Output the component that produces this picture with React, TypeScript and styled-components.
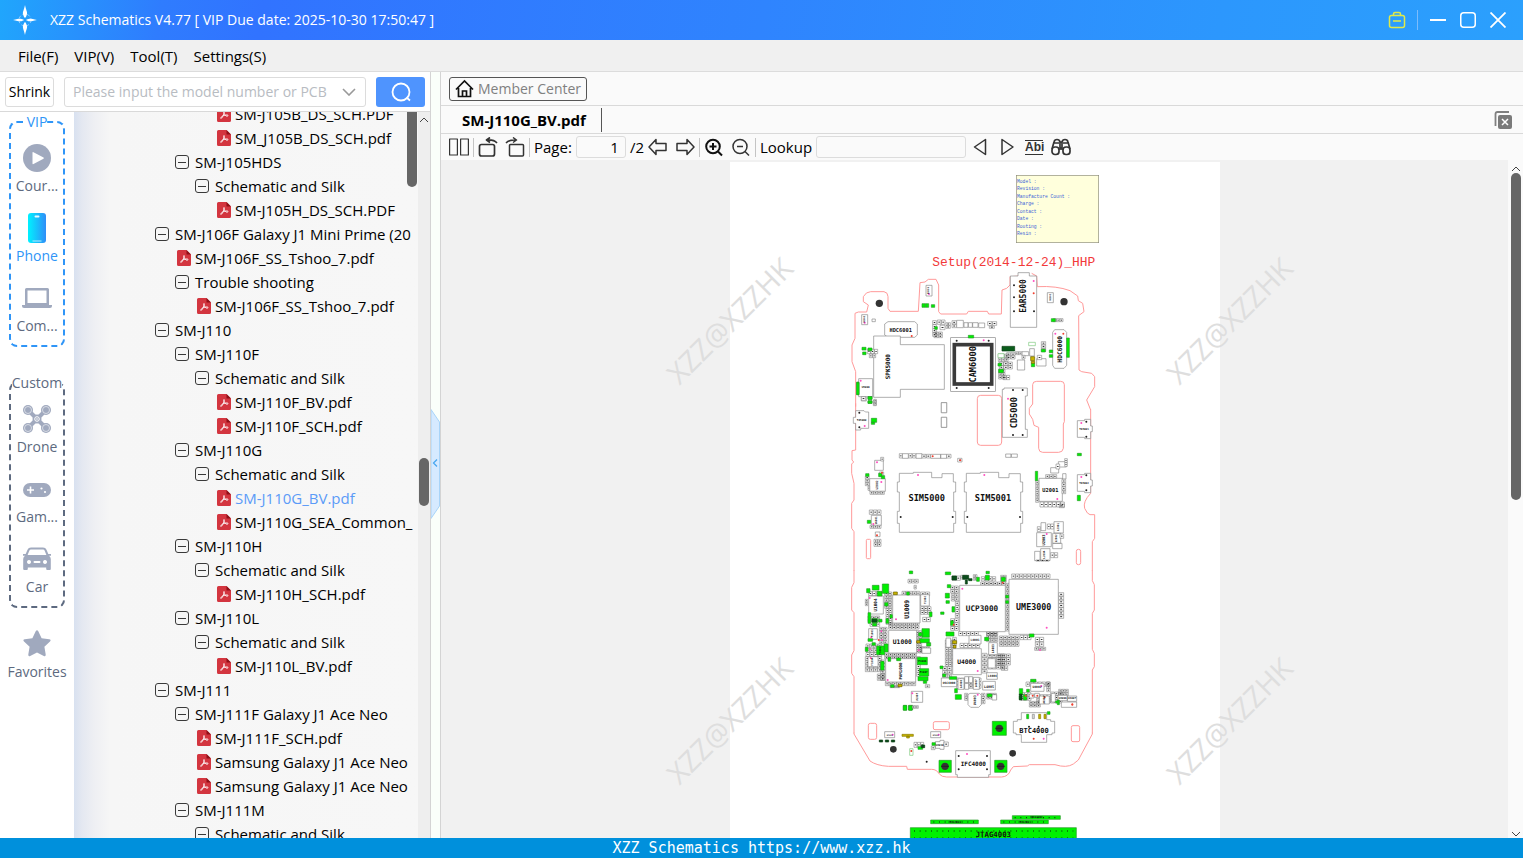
import React from 'react';
import styled, { createGlobalStyle } from 'styled-components';

const Global = createGlobalStyle`
  * { box-sizing: border-box; }
  body { margin: 0; background: #fff; font-family: "Open Sans", "Noto Sans", sans-serif; font-size: 15px; color: #000; }
  button, input { font: inherit; color: inherit; margin: 0; padding: 0; }
  button { background: none; border: 0; cursor: pointer; }
  svg { display: block; flex: none; }
  ul { list-style: none; margin: 0; padding: 0; }
`;

/* ---------- frame ---------- */
const Window = styled.div`
  display: flex; flex-direction: column; height: 100vh; overflow: hidden;
`;
const TitleBar = styled.header`
  flex: none; height: 40px; display: flex; align-items: center; padding: 0 15px 0 10px;
  background: linear-gradient(100deg, #20a6fc 0, #2f7cfe 160px, #3173ff 260px, #2f84fe 50%, #2c97fd 80%, #2ba0fd 100%);
  color: #fff;
`;
const Title = styled.h1`
  flex: 1; margin: 0 0 0 10px; font-size: 14px; font-weight: 400; line-height: 20px; white-space: nowrap;
`;
const WindowTools = styled.div`display: flex; align-items: center; gap: 10px;`;
const TitleButton = styled.button`width: 20px; height: 20px; display: grid; place-items: center;`;
const TitleRule = styled.span`width: 1px; height: 20px; background: #7cbcfc;`;
const MenuBar = styled.nav`
  flex: none; height: 32px; display: flex; align-items: center; gap: 16px; padding: 0 18px;
  background: #f0f0f0; border-bottom: 1px solid #dcdcdc;
`;
const MenuItem = styled.button`line-height: 20px; white-space: nowrap;`;
const Main = styled.main`flex: 1; min-height: 0; display: flex;`;
const StatusBar = styled.footer`
  flex: none; height: 20px; background: #0090dc; color: #fff; text-align: center;
  font: 15px/20px "DejaVu Sans Mono", monospace;
`;

/* ---------- left side ---------- */
const Side = styled.aside`
  flex: 0 0 431px; min-width: 0; display: flex; flex-direction: column; background: #fff; border-right: 1px solid #d4d4d4;
`;
const SearchRow = styled.form`
  flex: none; height: 40px; display: flex; align-items: center; gap: 10px; padding: 0 5px; border-bottom: 1px solid #d9d9d9;
`;
const ShrinkButton = styled.button`
  flex: 0 0 49px; height: 30px; border: 1px solid #dcdcdc; border-radius: 3px; background: #fff; font-size: 14px;
`;
const Combo = styled.div`
  flex: 1; min-width: 0; height: 30px; display: flex; align-items: center; border: 1px solid #dcdcdc; border-radius: 3px;
`;
const ComboInput = styled.input`
  flex: 1; min-width: 0; height: 28px; padding-left: 8px; border: 0; outline: 0; background: none; font-size: 14px;
  &::placeholder { color: #b8bcc2; }
`;
const ComboArrow = styled.button`width: 32px; height: 28px; display: grid; place-items: center;`;
const SearchButton = styled.button`
  flex: 0 0 49px; height: 30px; display: grid; place-items: center; background: #4f94fe; border-radius: 3px;
`;
const SideBody = styled.div`flex: 1; min-height: 0; display: flex;`;
const CategoryNav = styled.nav`flex: 0 0 74px; padding: 0 9px; overflow: hidden; background: #fff;`;
const Group = styled.fieldset<{ $tone: string }>`
  margin: 0 0 26px; padding: 0 0 3px; min-width: 0; border: 2px dashed ${p => p.$tone}; border-radius: 8px;
  &:last-of-type { margin-bottom: 10px; }
`;
const GroupName = styled.legend<{ $tone: string }>`
  margin: 0 auto; padding: 0; height: 20px; font-size: 14px; line-height: 20px; white-space: nowrap; color: ${p => p.$tone};
`;
const Category = styled.button<{ $active?: boolean }>`
  width: 100%; height: 70px; padding: 11px 0 6px; display: flex; flex-direction: column; align-items: center; gap: 3px;
  font-size: 14px; line-height: 20px; color: ${p => (p.$active ? '#2f95f7' : '#5d6a80')};
`;
const TreePane = styled.div`
  position: relative; flex: 1; min-width: 0; overflow: hidden; padding-left: 81px;
  background: linear-gradient(90deg, #d8e1f0 0, #e4e8f1 8px, #eeeff3 20px, #f6f6f6 36px, #f7f7f7 100%);
`;
const Tree = styled.ul`margin-top: -10px;`;
const TreeRow = styled.li<{ $level: number }>`
  height: 24px; display: flex; align-items: center; gap: 6px; padding-left: ${p => p.$level * 20}px;
  line-height: 24px; white-space: nowrap;
`;
const Toggle = styled.button`
  width: 14px; height: 14px; flex: none; display: grid; place-items: center;
  border: 1px solid #3a3a3a; border-radius: 3px;
  &::after { content: ""; width: 8px; height: 1px; background: #3a3a3a; }
`;
const FileLink = styled.a<{ $current?: boolean }>`
  display: flex; align-items: center; gap: 4px; padding-left: 2px; text-decoration: none;
  color: ${p => (p.$current ? '#5b9bf8' : '#000')};
`;
const OuterScroll = styled.div`flex: 0 0 12px; padding: 4px 1px; background: #eeeeee;`;
const Thumb = styled.div<{ $top: number; $size: number }>`
  height: ${p => p.$size}px; margin-top: ${p => p.$top}px; border-radius: 5px; background: #666;
`;
const InnerThumb = styled(Thumb)`position: absolute; top: 0; right: 1px; width: 10px; border-radius: 0 0 5px 5px;`;
const Splitter = styled.div`
  flex: 0 0 10px; display: flex; align-items: center; padding-top: 18px; background: #fafffa; border-right: 1px solid #d4d4d4;
`;

/* ---------- right side ---------- */
const Content = styled.section`flex: 1; min-width: 0; display: flex; flex-direction: column; background: #fafafa;`;
const CenterRow = styled.div`
  flex: none; height: 34px; display: flex; align-items: center; padding: 0 8px; border-bottom: 1px solid #d9d9d9;
`;
const MemberButton = styled.button`
  height: 24px; display: flex; align-items: center; gap: 4px; padding: 0 5px; font-size: 14px;
  border: 1px solid #555; border-radius: 3px; color: #808080;
`;
const TabRow = styled.div`
  flex: none; height: 28px; display: flex; align-items: center; justify-content: space-between;
  padding-right: 10px; border-bottom: 1px solid #d9d9d9;
`;
const Tab = styled.button`
  height: 24px; padding: 0 15px 0 21px; border-right: 1px solid #555; font-size: 15px; font-weight: 700;
`;
const Toolbar = styled.div`flex: none; height: 26px; display: flex; align-items: center; gap: 4px; padding: 0 8px; line-height: 20px;`;
const ToolGroup = styled.div`display: flex; align-items: center; gap: 7px;`;
const ToolButton = styled.button`width: 20px; height: 22px; display: grid; place-items: center;`;
const Divider = styled.span`width: 1px; height: 19px; background: #c4c4c4;`;
const PageInput = styled.input`
  width: 50px; height: 22px; padding-right: 6px; border: 1px solid #dcdcdc; border-radius: 3px; background: #fafafa; text-align: right;
`;
const LookupInput = styled.input`
  width: 150px; height: 22px; border: 1px solid #dcdcdc; border-radius: 3px; background: #fafafa;
`;
const Abi = styled.span`
  width: 18px; border: solid #333; border-width: 1px 0; font: 700 12px/13px "Liberation Sans", sans-serif; color: #333;
`;
const Viewer = styled.div`flex: 1; min-height: 0; display: flex;`;
const Canvas = styled.div`
  flex: 1; min-width: 0; overflow: hidden; display: flex; flex-direction: column; align-items: center; padding-top: 2px; background: #f1f1f1;
`;
const Paper = styled.div`width: 490px; height: 676px; flex: none; background: #fff; svg { overflow: visible; }`;
const ViewerScroll = styled.div`
  flex: 0 0 14px; display: flex; flex-direction: column; align-items: stretch; padding: 5px 2px 0 3px; background: #fafafa;
`;
const ScrollGap = styled.span`flex: 1;`;

/* ---------- icons ---------- */
const Arrow = ({ down }: { down?: boolean }) => (
  <svg width="10" height="8" viewBox="0 0 10 8" fill="none" stroke="#444" strokeWidth="1">
    <path d={down ? 'M1 2l4 4 4-4' : 'M1 6l4-4 4 4'} />
  </svg>
);
const Logo = () => (
  <svg width="30" height="32" viewBox="0 0 30 32">
    <circle cx="15" cy="16" r="6" fill="none" stroke="#8fccff" strokeDasharray="3 2" />
    <g fill="#fff">
      <path d="M15 1c1 5 2.500 7 2 9s-1 3-2 4c-1-1-1.500-2-2-4s1-4 2-9z" />
      <path d="M15 31c1-5 2.500-7 2-9s-1-3-2-4c-1 1-1.500 2-2 4s1 4 2 9z" />
      <path d="M3 16c4-1 6-1.500 7.500-1.300S13 15.300 14 16c-1 .700-2 1.200-3.500 1.300S7 17 3 16z" />
      <path d="M27 16c-4-1-6-1.500-7.500-1.300S17 15.300 16 16c1 .700 2 1.200 3.500 1.300S23 17 27 16z" />
    </g>
  </svg>
);
const PdfIcon = () => (
  <svg width="14" height="16" viewBox="0 0 14 16">
    <path d="M1.500 0H9.500L14 4.500V14.500A1.500 1.500 0 0 1 12.500 16H1.500A1.500 1.500 0 0 1 0 14.500V1.500A1.500 1.500 0 0 1 1.500 0z" fill="#d3353f" />
    <path d="M9.500 0L14 4.500H9.500z" fill="#8f1018" />
    <path d="M7 5.500c-.800 1 .500 3 1.500 4s2.500 1 2.500 0-3.500-.400-5 .300-2.500 2-2.300 2.500 1.300-.300 2-1.800S7.800 6.500 7 5.500z" fill="none" stroke="#fff" strokeWidth=".9" />
  </svg>
);
const CatSvg = ({ children }: { children: React.ReactNode }) => (
  <svg width="30" height="30" viewBox="0 0 30 30" fill="#a0a9be">{children}</svg>
);
const PlayIcon = () => (
  <CatSvg><circle cx="15" cy="15" r="14" /><path d="M10.500 9.500v11q0 1 1 .500l10-5.200q.800-.600 0-1.200l-10-5.400q-1-.500-1 .300z" fill="#fff" /></CatSvg>
);
const PhoneIcon = () => (
  <CatSvg>
    <defs><linearGradient id="ph"><stop offset="0" stopColor="#00f2ff" /><stop offset="1" stopColor="#2f8ef8" /></linearGradient></defs>
    <rect x="6" y="0" width="18" height="30" rx="3" fill="url(#ph)" />
    <rect x="12.500" y="2.500" width="5" height="2" rx="1" fill="#e8fbff" />
    <path d="M10.500 28h9" stroke="#b9ecff" />
  </CatSvg>
);
const LaptopIcon = () => (
  <CatSvg><path d="M4.500 5h21q1.500 0 1.500 1.500V22H3V6.500Q3 5 4.500 5zM5.500 7.500V20h19V7.500z" fillRule="evenodd" /><path d="M0 22h30v1q0 2-2 2H2q-2 0-2-2z" /></CatSvg>
);
const DroneIcon = () => (
  <CatSvg>
    <path d="M7 7L23 23M23 7L7 23" stroke="#a0a9be" strokeWidth="4" />
    <circle cx="15" cy="15" r="4.500" />
    {[[6, 6], [24, 6], [6, 24], [24, 24]].map(([x, y]) => (
      <g key={`${x}-${y}`}><circle cx={x} cy={y} r="5" /><circle cx={x} cy={y} r="3.500" fill="none" stroke="#e4e7ee" strokeWidth=".8" /></g>
    ))}
    <circle cx="15" cy="15" r="2.300" fill="none" stroke="#fff" /><circle cx="15" cy="15" r=".8" fill="#fff" />
  </CatSvg>
);
const GameIcon = () => (
  <CatSvg>
    <rect x="1" y="9" width="28" height="14" rx="7" />
    <path d="M8.500 12.500v7M5 16h7" stroke="#fff" strokeWidth="1.600" />
    <circle cx="19.500" cy="14.500" r="1.100" fill="#fff" /><circle cx="23" cy="18" r="1.100" fill="#fff" />
  </CatSvg>
);
const CarIcon = () => (
  <CatSvg>
    <path fillRule="evenodd" d="M9 3.500h12q2.600 0 3.500 2.300L26.300 10H29v1.800h-2q1.800 1.300 1.800 3.200V25q0 1-1 1h-2.600q-1 0-1-1v-1.500H5.800V25q0 1-1 1H2.200q-1 0-1-1V15q0-1.900 1.800-3.200H1V10h2.700l1.800-4.200Q6.400 3.500 9 3.500zM9 5.500q-1.200 0-1.700 1.200L5.600 11h18.800l-1.700-4.300Q22.200 5.500 21 5.500zM7 16a2 2 0 1 0 .01 0zM23 16a2 2 0 1 0 .01 0zM12.500 17h5q1 0 1 1t-1 1h-5q-1 0-1-1t1-1z" />
  </CatSvg>
);
const StarIcon = () => (
  <CatSvg><path d="M13.700 2.200q1.300-1.900 2.600 0l3.300 7 7.600 1.100q2.300.500.800 2.200l-5.600 5.300 1.300 7.800q.200 2.200-1.900 1.400L15 23.400l-6.800 3.600q-2.100.800-1.900-1.400l1.300-7.800L2 12.500q-1.500-1.700.800-2.200l7.600-1.100z" /></CatSvg>
);
const Tool = ({ children, w = 1.5 }: { children: React.ReactNode; w?: number }) => (
  <svg width="20" height="20" viewBox="0 0 20 20" fill="none" stroke="#333" strokeWidth={w} strokeLinejoin="round">{children}</svg>
);

/* ---------- board drawing ---------- */
type Box = [number, number, number, number];

const boxes = (data: string): Box[] =>
  data.trim().split(/\s*;\s*/).filter(Boolean).map(s => s.split(' ').map(Number) as Box);
const outline = ([x, y, w, h]: Box) => `M${x} ${y}h${w}v${h}h${-w}z`;

/* Component outlines; each entry is "x y width height". */
const Parts = ({ at, fill = '#fff', line = '#8a8a8a' }: { at: string; fill?: string; line?: string }) => (
  <path d={boxes(at).map(outline).join('')} fill={fill} stroke={line} strokeWidth="2" />
);
const Green = ({ at }: { at: string }) => <Parts at={at} fill="#00f000" line="#2a9a2a" />;

/* A run of small pads with the dark reference mark in the middle of each. */
const Pads = ({ at, cw = 12, ch = 12 }: { at: string; cw?: number; ch?: number }) => {
  const cells: Box[] = [];
  boxes(at).forEach(([x, y, w, h]) => {
    const nx = Math.max(1, Math.round(w / cw));
    const ny = Math.max(1, Math.round(h / ch));
    for (let i = 0; i < nx; i++) for (let j = 0; j < ny; j++)
      cells.push([x + (i * w) / nx, y + (j * h) / ny, w / nx - 1, h / ny - 1]);
  });
  return (
    <>
      <path d={cells.map(outline).join('')} fill="#fff" stroke="#777" strokeWidth="1.600" />
      <path d={cells.map(([x, y, w, h]) => `M${x + w * 0.3} ${y + h / 2}h${w * 0.4}`).join('')} stroke="#333" strokeWidth="3" />
    </>
  );
};
const Dots = ({ at, tone, r = 3 }: { at: string; tone: string; r?: number }) => (
  <>{at.split(';').map(p => { const [x, y] = p.trim().split(' '); return <circle key={p} cx={x} cy={y} r={r} fill={tone} />; })}</>
);
const Ref = ({ x, y, size, up, children }: { x: number; y: number; size: number; up?: boolean; children: string }) => (
  <text x={x} y={y} fontFamily="'DejaVu Sans Mono', monospace" fontWeight="700" fontSize={size} fill="#111"
    textAnchor="middle" dominantBaseline="central" transform={up ? `rotate(-90 ${x} ${y})` : undefined}>{children}</text>
);

const FIELDS = ['Model :', 'Revision :', 'Manufacture Count :', 'Charge :', 'Contact :', 'Date :', 'Routing :', 'Resin :'];

const UpperBoard = () => (
  <g transform="translate(330 24)">
    <rect x="529" y="16" width="247" height="202" fill="#ffffdc" stroke="#8c8c78" strokeWidth="2" />
    {FIELDS.map((f, i) => (
      <text key={f} x="531" y={38 + i * 22.6} fontFamily="'Liberation Mono', monospace" fontSize="14" fill="#3b63d8">{f}</text>
    ))}
    <text x="277" y="289" fontFamily="'Liberation Mono', monospace" fontSize="38.800" fill="#f23a3a">Setup(2014-12-24)_HHP</text>
    <g fill="none" stroke="#ff9a9a" strokeWidth="3">
      <path d="M47 710V605L36 575V525L45 505V430L55 426H80L85 405 70 395V380Q78 365 92 365H132Q144 367 144 380V415L150 424H235L240 338 255 336 265 328H288L296 345V425L302 432H380L385 424H442L446 432H484L486 360 500 355 510 345V320L540 318M575 310L590 318 592 350Q650 347 690 362L713 378 715 392 728 400 732 425 716 437 717 600 725 605 755 610 764 620V650L740 690 752 720" />
    </g>
    <g fill="#fff" stroke="#888" strokeWidth="2">
      <path d="M511 318H534V308H568V318H590V472H511z" />
      <path d="M144 455H224L232 462V495L224 502H144L134 495V462z" />
      <path d="M101 498H181V524H313V658H181V682H101z" />
      <rect x="332" y="503" width="134" height="161" />
      <path d="M644 479H672L680 487V586L672 595H644L638 586V487z" />
      <path d="M56 626H98V680H56zM258 346h18v32h-18zM65 434h18v30H65zM622 368h18v30h-18zM304 698h16v30h-16zM304 742h16v30h-16z" />
    </g>
    <rect x="343" y="524" width="112" height="118" fill="none" stroke="#3a3a3a" strokeWidth="11" />
    <rect x="350" y="531" width="98" height="104" fill="#fff" />
    <Dots at="118 400;672 395" tone="#333" r={11} />
    <Dots at="350 512;446 512;350 654;446 654;522 346;522 382;522 424;582 424;518 660;548 660" tone="#222" />
    <Dots at="581 333;431 511;62 632;646 491;267 372;74 458" tone="#ff50c0" />
    <Dots at="581 370;670 491;215 498;544 578;497 625;613 584" tone="#f04030" />
    <Parts at="350 451 20 22;372 458 12 14;385 458 12 14;398 458 16 14;416 459 18 14;532 570 22 30;590 566 28 22;96 447 10 8;546 545 20 12;569 536 14 22" />
    <Pads at="278 452 12 48;292 450 24 14;300 466 16 14;282 486 26 18;318 458 14 18;336 452 14 22;443 455 28 12;448 468 16 8;475 552 30 24;478 576 40 22;476 598 20 30;490 616 20 14;500 548 26 20;526 545 20 10;604 515 14 30;592 556 14 14;640 446 30 10;64 682 16 12;100 690 10 18;82 538 32 14;88 552 20 12;546 556 10 12" />
    <Green at="246 401 10 11;257 401 9 11;274 404 10 8;385 496 16 8;284 470 8 8;66 532 12 8;84 534 12 8;68 546 10 8;50 636 7 38;84 680 12 8;84 692 12 8;628 540 10 8;628 554 10 8;680 504 8 58;476 598 14 10;474 580 10 8;604 538 12 8;634 446 12 9;574 580 10 10" />
    <Parts at="486 529 38 14" fill="#0b5d1c" line="#0b3d12" />
    <Parts at="566 517 20 10;474 551 18 12" line="#7bc87b" />
    <Parts at="572 560 12 12;574 574 10 6" fill="#c8b400" line="#6b6000" />
    <Ref x={551} y={378} size={24} up>EAR5000</Ref>
    <Ref x={182} y={479} size={16}>HDC6001</Ref>
    <Ref x={142} y={590} size={18} up>SPK5000</Ref>
    <Ref x={399} y={583} size={26} up>CAM6000</Ref>
    <Ref x={659} y={538} size={19} up>HDC6000</Ref>
    <Ref x={77} y={653} size={8}>U5000</Ref>
    <Ref x={267} y={362} size={7} up>R6001</Ref>
    <Ref x={74} y={448} size={7} up>R6002</Ref>
    <Ref x={631} y={382} size={7} up>R6003</Ref>
  </g>
);

const MiddleBoard = () => (
  <g transform="translate(330 654)">
    <g fill="none" stroke="#ff9a9a" strokeWidth="3">
      <path d="M47 70V210L36 212V240L41 246 35 252V280L42 310V360L35 370V445L42 455V572" />
      <path d="M752 88V340Q728 365 734 385 742 403 750 404H764V475L757 485V572" />
      <rect x="412" y="46" width="73" height="150" rx="10" />
      <path d="M590 4H662Q673 4 673 14V125L670 132V205Q668 217 656 217H608Q597 217 596 205V142L582 136 578 118 568 102V85L578 72V14Q578 4 590 4z" />
      <rect x="79" y="478" width="13" height="58" rx="3" /><rect x="709" y="508" width="13" height="46" rx="6" />
    </g>
    <g fill="#fff" stroke="#888" strokeWidth="2">
      <path d="M487 28H492V24H562V48H556V148H562V172H487z" />
      <path d="M178 280H220V277H275V293H306V281H340V306H347V336H341V394H347V430H341V457H178V430H172V394H178V336H172V306H178z" />
      <path d="M379 280H421V277H476V293H507V281H541V306H548V336H542V394H548V430H542V457H379V430H373V394H379V336H373V306H379z" />
      <path d="M47 92H72L76 96H86V145H62V150H47V130H40V112H47z" />
      <path d="M712 122H734V118H752V138H757V155H752V176H734V172H712z" />
      <path d="M712 284H734V280H752V300H757V318H752V338H734V334H712z" />
    </g>
    <Parts at="597 295 70 69;89 296 47 38;104 241 26 30;94 406 30 30;590 458 44 42;642 425 28 34;638 460 24 30;602 506 28 36;638 490 28 16;584 514 16 28;304 68 16 30;304 112 16 30;187 221 18 14;228 221 18 14;272 223 30 12;302 223 18 12;497 222 16 10;514 222 18 10;632 263 24 16;655 245 24 16;603 428 14 24;106 456 14 14;668 281 10 16" />
    <Pads at="178 221 10 14;206 221 22 14;246 223 26 12;320 223 14 12;353 235 14 12;587 302 10 66;600 366 74 16;617 284 34 11;666 298 12 44;622 432 20 16;632 518 22 16;592 440 10 16;660 462 12 14;76 288 12 30;84 318 6 14;90 334 44 10;122 232 10 12;118 276 14 14;88 390 36 14;90 436 34 10;102 478 22 22;648 252 12 16;674 236 9 24;64 50 14 12;102 58 8 18;658 372 16 12" />
    <Green at="50 8 7 36;84 50 12 8;84 63 12 7;94 115 16 12;94 127 10 6;586 274 7 28;712 220 12 7;712 346 9 16;77 281 10 8;116 280 10 10;124 287 10 9;82 421 10 9" />
    <Dots at="519 30;548 30;519 165;548 165;58 98;58 142;739 125;739 170;739 286;739 331;182 411;338 411;382 411;540 411" tone="#222" />
    <Dots at="504 56;74 138;724 129;724 291;234 285;433 285;652 357;111 247;100 432;620 462;124 306" tone="#ff50c0" />
    <Dots at="278 229;111 466;361 241;126 278" tone="#f04030" />
    <Ref x={523} y={98} size={26} up>CD5000</Ref>
    <Ref x={260} y={353} size={26}>SIM5000</Ref>
    <Ref x={459} y={353} size={26}>SIM5001</Ref>
    <Ref x={631} y={330} size={16}>U2001</Ref>
    <Ref x={65} y={121} size={8}>TA5000</Ref>
    <Ref x={732} y={147} size={8}>TA5001</Ref>
    <Ref x={732} y={309} size={8}>TA5002</Ref>
    <Ref x={112} y={315} size={9} up>U2002</Ref>
    <Ref x={612} y={480} size={11} up>U2003</Ref>
    <Ref x={109} y={421} size={8} up>U6001</Ref>
    <Ref x={656} y={441} size={8} up>L2001</Ref>
    <Ref x={615} y={524} size={8} up>L2004</Ref>
    <Ref x={650} y={475} size={8} up>L2002</Ref>
  </g>
);

const ChipBoard = () => (
  <g transform="translate(330 1194)">
    <g fill="none" stroke="#ff9a9a" strokeWidth="3">
      <path d="M42 30V68L35 82V150L42 158V272L35 285V340L42 350V520" />
      <path d="M757 30V62L763 74V150L757 160V268L763 280V320L757 330V520" />
    </g>
    <Pads at="515 42 116 14;656 98 16 78;640 76 14 10;422 66 76 10;332 78 24 22;334 100 22 24;346 124 12 50;332 176 24 36;356 214 60 14;440 214 30 14;478 228 60 32;540 226 34 14;316 240 30 80;308 320 28 34;360 250 60 14;350 354 74 32;426 280 16 60;440 216 34 30;338 232 12 26;444 282 50 46;474 282 38 34;484 318 20 14;498 70 10 144" />
    <Pads at="134 96 22 50;138 146 18 48;146 188 92 20;186 94 54 12;242 96 28 12;242 140 32 24;248 172 24 14;134 280 96 18;122 300 14 62;136 366 92 12;228 212 18 68;84 168 36 18;90 186 30 14;118 202 24 50;78 252 48 38;76 290 50 46;112 342 22 20;76 118 8 20;86 94 34 14;240 260 30 18;256 374 14 10;230 290 12 60;150 378 30 6" ch={11} />
    <Pads at="558 366 72 14;544 398 30 24;568 424 34 18;590 404 42 26;632 396 36 34;620 366 12 30;656 388 30 20;586 232 26 28;584 262 34 10;204 58 32 12;222 76 8 12;374 400 10 22;424 400 12 32;440 400 30 18;336 48 26 14;362 46 20 12;400 44 12 18;424 50 44 14;482 46 18 20;588 0 40 4" />
    <Parts at="359 76 137 139;507 58 148 165;158 105 82 84;146 211 84 68;137 296 90 70;338 266 86 78;86 108 44 54;242 104 26 34;86 206 26 32;84 290 30 30;246 264 26 16;214 394 34 33;387 226 36 26;446 248 26 36;444 296 22 28;440 338 32 20;428 364 38 26;304 354 46 26;354 356 18 32;400 352 18 36;374 350 12 18;386 350 12 18;374 370 12 18;572 370 40 24;598 408 30 24;634 400 12 26;654 406 28 16;682 408 28 16;664 426 46 16;568 402 14 12;584 400 14 12;456 404 14 16;318 234 14 28" />
    <path d="M384 404L390 400H418L424 406V434L416 442H392L384 434z" fill="#fff" stroke="#888" strokeWidth="2" />
    <Green at="208 33 10 8;316 36 16 8;438 34 10 7;322 74 10 9;316 100 12 14;318 122 10 8;302 156 10 7;336 140 8 16;318 216 24 12;332 182 8 14;436 46 12 14;410 52 8 12;484 52 12 12;497 106 9 8;497 122 9 8;568 222 14 9;434 232 12 10;300 318 9 8;308 342 9 8;328 350 22 8;344 386 8 12;346 404 18 14;442 402 14 8" />
    <Green at="97 76 20 14;127 72 19 28;80 86 10 12;112 94 14 14;96 176 16 12;116 178 10 8;134 128 10 10;84 158 8 32;150 164 7 10;138 176 8 14;246 206 22 26;236 218 12 10;238 236 30 12;260 248 12 10;110 258 24 26;96 248 10 8;122 304 10 26;144 292 8 12;170 294 12 8;232 292 30 22;238 326 28 22;234 350 30 12;250 362 10 8;190 436 10 14;206 436 12 14;84 236 14 8;268 156 8 14;200 96 8 9;152 374 10 8;132 252 12 24;76 262 8 12;98 190 12 8" />
    <Green at="572 358 16 8;538 386 10 18;550 404 10 16;560 388 8 8;652 420 6 14;538 408 8 10" />
    <Parts at="336 48 14 12;368 46 18 12;376 60 6 12;96 178 14 8;538 402 8 18;386 56 10 6" fill="#0b4d1c" line="#0b3d12" />
    <Parts at="160 96 12 8;230 242 10 7;174 373 12 7;338 242 12 9;340 256 8 8" fill="#c8b400" line="#6b6000" />
    <Dots at="367 86;620 203;168 178;236 271;143 360;413 333;89 114;94 232;92 294;217 400;126 240;413 404;600 270;90 268;604 378;124 214" tone="#ff50c0" />
    <Dots at="557 407;578 407;592 407;697 433;614 412;341 194;488 68;116 240" tone="#f04030" />
    <Ref x={426} y={146} size={23}>UCP3000</Ref>
    <Ref x={581} y={141} size={25}>UME3000</Ref>
    <Ref x={199} y={148} size={19} up>U1009</Ref>
    <Ref x={187} y={244} size={19}>U1000</Ref>
    <Ref x={380} y={305} size={19}>U4000</Ref>
    <Ref x={181} y={333} size={12} up>PAM1000</Ref>
    <Ref x={106} y={135} size={13} up>U1004</Ref>
    <Ref x={591} y={380} size={9}>U4002</Ref>
    <Ref x={404} y={421} size={10} up>U4003</Ref>
    <Ref x={327} y={368} size={9}>OSC4000</Ref>
    <Ref x={405} y={240} size={9}>L4001</Ref>
    <Ref x={459} y={266} size={9} up>L4003</Ref>
    <Ref x={457} y={348} size={9}>L4004</Ref>
    <Ref x={447} y={380} size={10}>L4005</Ref>
    <Ref x={231} y={411} size={8} up>U1007</Ref>
    <Ref x={257} y={120} size={8} up>F1002</Ref>
    <Ref x={99} y={220} size={8} up>F1003</Ref>
    <Ref x={99} y={305} size={8} up>F1004</Ref>
    <Ref x={122} y={272} size={8} up>F1001</Ref>
    <Ref x={247} y={304} size={8}>F1006</Ref>
    <Ref x={251} y={338} size={8}>F1007</Ref>
    <Ref x={668} y={415} size={8}>U4006</Ref>
    <Ref x={696} y={415} size={8}>U4007</Ref>
    <Ref x={613} y={420} size={8} up>U4008</Ref>
    <Ref x={411} y={370} size={8} up>L4007</Ref>
    <Ref x={363} y={372} size={8} up>L4008</Ref>
  </g>
);

const LowerBoard = () => (
  <g transform="translate(330 1614)">
    <g fill="none" stroke="#ff9a9a" strokeWidth="3">
      <path d="M42 98V102L90 183Q110 197 145 199H200L202 208H275Q290 208 298 222 305 231 320 231H485Q505 230 512 210L520 200 562 198 568 194H645Q680 205 700 192L715 180 757 102V98" />
      <rect x="85" y="70" width="25" height="48" rx="6" /><rect x="280" y="65" width="48" height="24" rx="5" /><rect x="694" y="77" width="25" height="48" rx="5" />
    </g>
    <g fill="#fff" stroke="#888" strokeWidth="2">
      <path d="M544 38H620V59H632V64H644V99H636V104H620V127H544V104H528V99H520V64H532V59H544z" />
      <path d="M347 152H451V224H446V232H352V224H347z" />
      <path d="M286 125H300V121H312V148H300V145H286zM134 95h30v18h-30zM272 95h30v18h-30z" />
    </g>
    <Pads at="312 126 14 14;222 127 30 16;274 138 12 12;206 17 30 9" />
    <Green at="457 64 42 42;297 181 37 36;464 181 37 36;190 17 10 14;206 17 10 14;622 35 8 8;560 43 6 13;234 140 14 8;276 128 10 8;647 3 10 6" />
    <Parts at="118 120 10 6;136 120 10 6;154 120 10 6;244 135 10 8" fill="#0b4d1c" line="#0b3d12" />
    <Parts at="186 103 34 6;200 108 8 6;596 43 6 13;612 43 6 13" fill="#c8b400" line="#8a7c00" />
    <Parts at="209 146 10 20" line="#7bc87b" /><Parts at="577 43 6 13" fill="#ddd" />
    <Dots at="478 85;315 199;482 199" tone="#333" r={11} />
    <path d="M466 85h24M303 199h24M470 199h24" stroke="#222" strokeWidth="3" />
    <Dots at="160 148;518 160" tone="#333" r={10} />
    <Dots at="260 185;356 168;441 168;356 208;441 208;567 80;596 80" tone="#222" />
    <Dots at="381 162;611 116;158 104;296 104" tone="#ff50c0" />
    <Dots at="581 116;697 14;214 153" tone="#f04030" />
    <Ref x={582} y={94} size={21}>BTC4000</Ref>
    <Ref x={400} y={190} size={18}>IFC4000</Ref>
    <Ref x={299} y={136} size={8}>U4010</Ref>
    <Ref x={149} y={104} size={6}>R7001</Ref>
    <Ref x={287} y={104} size={6}>R7002</Ref>
    <Green at="272 360 143 11;482 360 143 11;517 347 144 11;211 383 498 48" />
    <path d="M280 366H408M490 366H618M524 353H654M222 393H700M222 414H700" stroke="#111" strokeWidth="3" strokeDasharray="3 14" />
    <Ref x={344} y={366} size={8}>JTAG4000</Ref>
    <Ref x={554} y={366} size={8}>JTAG4001</Ref>
    <Ref x={589} y={353} size={8}>JTAG4002</Ref>
    <Ref x={460} y={404} size={22}>JTAG4003</Ref>
  </g>
);

const MARKS = [[-3, 474], [1497, 474], [-3, 1674], [1497, 1674]];
const BoardDrawing = () => (
  <svg width="490" height="676" viewBox="0 0 1470 2028" role="img" aria-label="Board view">
    <UpperBoard /><MiddleBoard /><ChipBoard /><LowerBoard />
    {MARKS.map(([x, y]) => (
      <text key={`${x}-${y}`} x={x} y={y} transform={`rotate(-45 ${x} ${y})`} textAnchor="middle" dominantBaseline="central"
        fontSize="86" fill="#dedede" fontFamily="'Open Sans', sans-serif">XZZ@XZZHK</text>
    ))}
  </svg>
);

/* ---------- data ---------- */
type Node = { level: number; name: string; file?: boolean; current?: boolean };
const dir = (level: number, name: string): Node => ({ level, name });
const pdf = (level: number, name: string, current = false): Node => ({ level, name, file: true, current });

const TREE: Node[] = [
  pdf(3, 'SM-J105B_DS_SCH.PDF'), pdf(3, 'SM_J105B_DS_SCH.pdf'),
  dir(1, 'SM-J105HDS'), dir(2, 'Schematic and Silk'), pdf(3, 'SM-J105H_DS_SCH.PDF'),
  dir(0, 'SM-J106F Galaxy J1 Mini Prime (20'), pdf(1, 'SM-J106F_SS_Tshoo_7.pdf'),
  dir(1, 'Trouble shooting'), pdf(2, 'SM-J106F_SS_Tshoo_7.pdf'),
  dir(0, 'SM-J110'),
  dir(1, 'SM-J110F'), dir(2, 'Schematic and Silk'), pdf(3, 'SM-J110F_BV.pdf'), pdf(3, 'SM-J110F_SCH.pdf'),
  dir(1, 'SM-J110G'), dir(2, 'Schematic and Silk'), pdf(3, 'SM-J110G_BV.pdf', true), pdf(3, 'SM-J110G_SEA_Common_'),
  dir(1, 'SM-J110H'), dir(2, 'Schematic and Silk'), pdf(3, 'SM-J110H_SCH.pdf'),
  dir(1, 'SM-J110L'), dir(2, 'Schematic and Silk'), pdf(3, 'SM-J110L_BV.pdf'),
  dir(0, 'SM-J111'),
  dir(1, 'SM-J111F Galaxy J1 Ace Neo'), pdf(2, 'SM-J111F_SCH.pdf'),
  pdf(2, 'Samsung Galaxy J1 Ace Neo'), pdf(2, 'Samsung Galaxy J1 Ace Neo'),
  dir(1, 'SM-J111M'), dir(2, 'Schematic and Silk'),
];

export default function App() {
  return (
    <Window>
      <Global />
      <TitleBar>
        <Logo />
        <Title>XZZ Schematics V4.77 [ VIP Due date: 2025-10-30 17:50:47 ]</Title>
        <WindowTools>
          <TitleButton aria-label="Toolbox">
            <svg width="18" height="18" viewBox="0 0 18 18" fill="none" stroke="#dfe94a" strokeWidth="1.500"><rect x="1.500" y="4.500" width="15" height="12" rx="2" /><path d="M5.500 4.500V3q0-1.500 1.500-1.500h4q1.500 0 1.500 1.500v1.500M5 10h8" /></svg>
          </TitleButton>
          <TitleRule />
          <TitleButton aria-label="Minimize"><svg width="16" height="16" viewBox="0 0 16 16"><path d="M0 8h16" stroke="#fff" strokeWidth="2" /></svg></TitleButton>
          <TitleButton aria-label="Maximize"><svg width="16" height="16" viewBox="0 0 16 16"><rect x=".75" y=".75" width="14.500" height="14.500" rx="3" fill="none" stroke="#fff" strokeWidth="1.500" /></svg></TitleButton>
          <TitleButton aria-label="Close"><svg width="16" height="16" viewBox="0 0 16 16"><path d="M.5.5l15 15M15.500.5l-15 15" stroke="#fff" strokeWidth="1.800" /></svg></TitleButton>
        </WindowTools>
      </TitleBar>
      <MenuBar>
        {['File(F)', 'VIP(V)', 'Tool(T)', 'Settings(S)'].map(m => <MenuItem key={m}>{m}</MenuItem>)}
      </MenuBar>
      <Main>
        <Side>
          <SearchRow onSubmit={e => e.preventDefault()}>
            <ShrinkButton type="button">Shrink</ShrinkButton>
            <Combo>
              <ComboInput aria-label="Model number" placeholder="Please input the model number or PCB" />
              <ComboArrow type="button" aria-label="History">
                <svg width="14" height="8" viewBox="0 0 14 8" fill="none" stroke="#999" strokeWidth="1.600"><path d="M1 1l6 6 6-6" /></svg>
              </ComboArrow>
            </Combo>
            <SearchButton aria-label="Search">
              <svg width="20" height="20" viewBox="0 0 20 20" fill="none" stroke="#fff" strokeWidth="1.800"><circle cx="10" cy="10" r="8.500" /><path d="M15.500 15.500l3.500 3" /></svg>
            </SearchButton>
          </SearchRow>
          <SideBody>
            <CategoryNav>
              <Group $tone="#2f95f7">
                <GroupName $tone="#2f95f7">VIP</GroupName>
                <Category><PlayIcon />Cour...</Category>
                <Category $active><PhoneIcon />Phone</Category>
                <Category><LaptopIcon />Com...</Category>
              </Group>
              <Group $tone="#5d6a80">
                <GroupName $tone="#5d6a80">Custom</GroupName>
                <Category><DroneIcon />Drone</Category>
                <Category><GameIcon />Gam...</Category>
                <Category><CarIcon />Car</Category>
              </Group>
              <Category><StarIcon />Favorites</Category>
            </CategoryNav>
            <TreePane>
              <Tree>
                {TREE.map(({ level, name, file, current }, i) => (
                  <TreeRow key={i} $level={level}>
                    {file
                      ? <FileLink href="#" $current={current}><PdfIcon />{name}</FileLink>
                      : <><Toggle aria-label={`Collapse ${name}`} />{name}</>}
                  </TreeRow>
                ))}
              </Tree>
              <InnerThumb $top={0} $size={75} />
            </TreePane>
            <OuterScroll><Arrow /><Thumb $top={334} $size={48} /></OuterScroll>
          </SideBody>
        </Side>
        <Splitter>
          <button aria-label="Hide side panel">
            <svg width="9" height="110" viewBox="0 0 9 110"><path d="M0 .5L8.500 13V97L0 109.500z" fill="#d6eaff" stroke="#a8d4f8" /><path d="M6 50.500l-3.500 3.500L6 57.500" fill="none" stroke="#4aa8f0" strokeWidth="1.300" /></svg>
          </button>
        </Splitter>
        <Content>
          <CenterRow>
            <MemberButton>
              <svg width="19" height="19" viewBox="0 0 19 19" fill="none" stroke="#111" strokeWidth="1.700"><path d="M1 10.500L9.500 2 18 10.500M3.500 9v8.500h12V9M7.500 17.500V12h4v5.500" /></svg>
              Member Center
            </MemberButton>
          </CenterRow>
          <TabRow>
            <Tab>SM-J110G_BV.pdf</Tab>
            <TitleButton aria-label="Close all tabs">
              <svg width="18" height="18" viewBox="0 0 18 18"><path d="M1.500 15V3q0-2 2-2H15" fill="none" stroke="#808080" strokeWidth="1.800" /><rect x="4" y="4" width="14" height="14" rx="2" fill="#7a7a7a" /><path d="M8 8l6 6M14 8l-6 6" stroke="#fff" strokeWidth="1.500" /></svg>
            </TitleButton>
          </TabRow>
          <Toolbar>
            <ToolButton aria-label="Two pages"><Tool w={1.2}><path d="M.6 2h7.800v16H.6zM11.600 2h7.800v16h-7.800z" /></Tool></ToolButton>
            <Divider />
            <ToolGroup>
              <ToolButton aria-label="Rotate left"><Tool w={1.7}><rect x="1.500" y="7.500" width="15" height="11.500" rx="2" /><path d="M19 6Q16 2.500 9 3M12 .5L8.500 3 12 5.500" /></Tool></ToolButton>
              <ToolButton aria-label="Rotate right"><Tool w={1.5}><rect x="4.500" y="7.500" width="14" height="11.500" rx="1" /><path d="M1 6Q4 2.500 11 3M8 .5L11.500 3 8 5.500" /></Tool></ToolButton>
            </ToolGroup>
            <Divider />
            <label htmlFor="page">Page:</label>
            <PageInput id="page" defaultValue="1" />
            <span>/2</span>
            <ToolGroup>
              <ToolButton aria-label="Previous page"><Tool><path d="M1 10L8 2.500V6.500H18V13.500H8V17.500z" /></Tool></ToolButton>
              <ToolButton aria-label="Next page"><Tool><path d="M19 10L12 2.500V6.500H2V13.500H12V17.500z" /></Tool></ToolButton>
            </ToolGroup>
            <Divider />
            <ToolGroup>
              <ToolButton aria-label="Zoom in"><Tool w={2}><circle cx="9" cy="9.500" r="6.800" stroke="#111" /><path d="M14 14.500l4 4M5.500 9.500h7M9 6v7" stroke="#111" /></Tool></ToolButton>
              <ToolButton aria-label="Zoom out"><Tool><circle cx="9" cy="9.500" r="7" /><path d="M14 14.500l4 4M6 9.500h6" /></Tool></ToolButton>
            </ToolGroup>
            <Divider />
            <label htmlFor="lookup">Lookup</label>
            <LookupInput id="lookup" />
            <ToolGroup>
              <ToolButton aria-label="Find previous"><Tool><path d="M15.500 2.500V17.500L4.500 10z" /></Tool></ToolButton>
              <ToolButton aria-label="Find next"><Tool><path d="M5 2.500V17.500L16 10z" /></Tool></ToolButton>
              <ToolButton aria-label="Whole word"><Abi>Abi</Abi></ToolButton>
              <ToolButton aria-label="Find in files"><Tool w={1.7}><rect x="1" y="10" width="7" height="7.500" rx="3" /><rect x="12" y="10" width="7" height="7.500" rx="3" /><path d="M1 12L3 5Q3.500 2.500 6 2.500T9 5V13M19 12L17 5Q16.500 2.500 14 2.500T11 5V13M9 5h2M9 11h2M3 6h5M12 6h5" /></Tool></ToolButton>
            </ToolGroup>
          </Toolbar>
          <Viewer>
            <Canvas><Paper><BoardDrawing /></Paper></Canvas>
            <ViewerScroll><Arrow /><Thumb $top={0} $size={327} /><ScrollGap /><Arrow down /></ViewerScroll>
          </Viewer>
        </Content>
      </Main>
      <StatusBar>XZZ Schematics https://www.xzz.hk</StatusBar>
    </Window>
  );
}
